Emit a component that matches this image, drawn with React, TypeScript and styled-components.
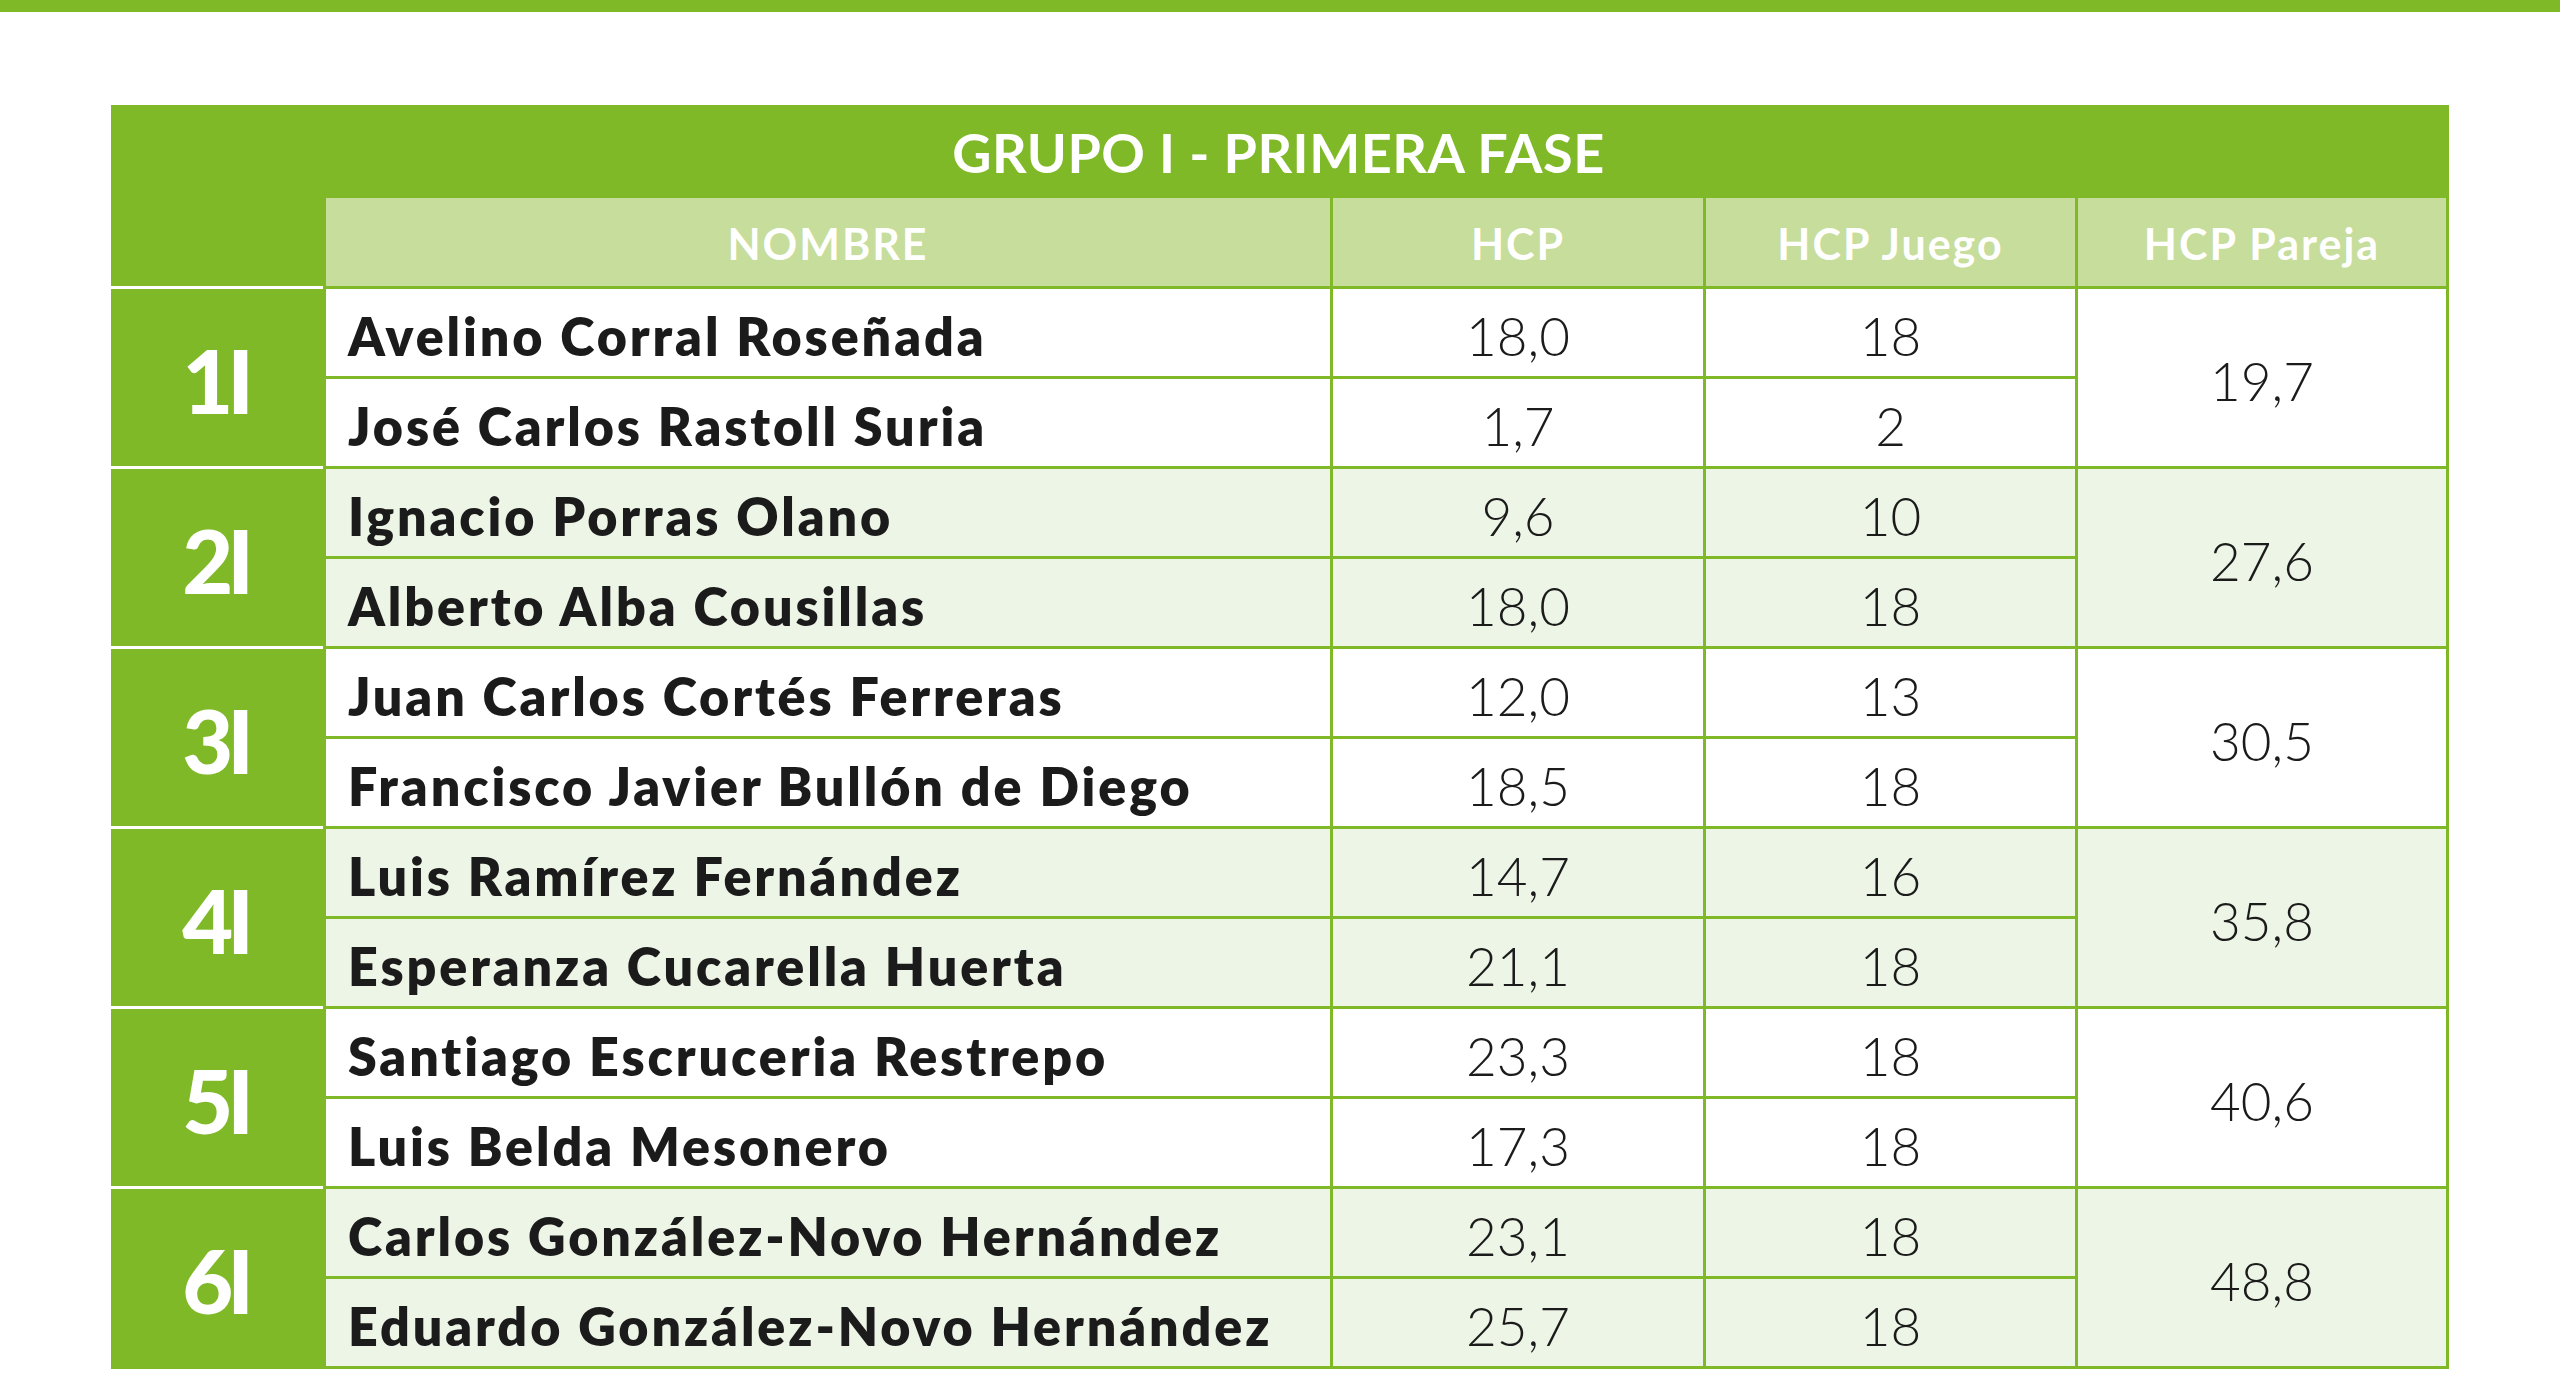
import { Fragment } from 'react'
import styled, { createGlobalStyle } from 'styled-components'

const colors = {
  green: '#7fb927',
  header: '#c6dd9c',
  tint: '#edf5e6',
  white: '#ffffff',
  text: '#1b1b1b',
}

type Player = { name: string; hcp: string; juego: string }
type Pair = { label: string; pareja: string; players: [Player, Player] }

const pairs: Pair[] = [
  {
    label: '1I',
    pareja: '19,7',
    players: [
      { name: 'Avelino Corral Roseñada', hcp: '18,0', juego: '18' },
      { name: 'José Carlos Rastoll Suria', hcp: '1,7', juego: '2' },
    ],
  },
  {
    label: '2I',
    pareja: '27,6',
    players: [
      { name: 'Ignacio Porras Olano', hcp: '9,6', juego: '10' },
      { name: 'Alberto Alba Cousillas', hcp: '18,0', juego: '18' },
    ],
  },
  {
    label: '3I',
    pareja: '30,5',
    players: [
      { name: 'Juan Carlos Cortés Ferreras', hcp: '12,0', juego: '13' },
      { name: 'Francisco Javier Bullón de Diego', hcp: '18,5', juego: '18' },
    ],
  },
  {
    label: '4I',
    pareja: '35,8',
    players: [
      { name: 'Luis Ramírez Fernández', hcp: '14,7', juego: '16' },
      { name: 'Esperanza Cucarella Huerta', hcp: '21,1', juego: '18' },
    ],
  },
  {
    label: '5I',
    pareja: '40,6',
    players: [
      { name: 'Santiago Escruceria Restrepo', hcp: '23,3', juego: '18' },
      { name: 'Luis Belda Mesonero', hcp: '17,3', juego: '18' },
    ],
  },
  {
    label: '6I',
    pareja: '48,8',
    players: [
      { name: 'Carlos González-Novo Hernández', hcp: '23,1', juego: '18' },
      { name: 'Eduardo González-Novo Hernández', hcp: '25,7', juego: '18' },
    ],
  },
]

export default function App() {
  return (
    <>
      <GlobalStyle />
      <TopBar />
      <Page>
        <Table>
          <Title>GRUPO I - PRIMERA FASE</Title>
          <Corner />
          <HeadCell>NOMBRE</HeadCell>
          <HeadCell>HCP</HeadCell>
          <HeadCell>HCP Juego</HeadCell>
          <HeadCell>HCP Pareja</HeadCell>

          {pairs.map((pair, index) => {
            const tinted = index % 2 === 1
            return (
              <Fragment key={pair.label}>
                <PairLabel>{pair.label}</PairLabel>
                {pair.players.map((player, i) => (
                  <Fragment key={player.name}>
                    <NameCell $tinted={tinted}>{player.name}</NameCell>
                    <NumberCell $tinted={tinted}>{player.hcp}</NumberCell>
                    <NumberCell $tinted={tinted}>{player.juego}</NumberCell>
                    {i === 0 && <PairCell $tinted={tinted}>{pair.pareja}</PairCell>}
                  </Fragment>
                ))}
              </Fragment>
            )
          })}
        </Table>
      </Page>
    </>
  )
}

const GlobalStyle = createGlobalStyle`
  html, body {
    margin: 0;
    padding: 0;
    background: ${colors.white};
  }
  body {
    font-family: Lato, 'Noto Sans', sans-serif;
    color: ${colors.text};
  }
  * {
    box-sizing: border-box;
  }
`

const TopBar = styled.div`
  height: 12px;
  background: ${colors.green};
`

const Page = styled.main`
  padding-top: 93px;
`

const Table = styled.section`
  width: 2338px;
  margin: 0 auto;
  display: grid;
  grid-template-columns: 212px 1007px 373px 372px 371px;
  grid-template-rows: 93px 88px repeat(12, 90px);
  border-right: 3px solid ${colors.green};
  border-bottom: 3px solid ${colors.green};
`

const Title = styled.h1`
  grid-column: 1 / -1;
  margin: 0;
  background: ${colors.green};
  color: ${colors.white};
  font-family: Lato, sans-serif;
  font-weight: 700;
  font-size: 54px;
  letter-spacing: 0.5px;
  display: flex;
  align-items: center;
  justify-content: center;
  padding-top: 2px;
`

const Corner = styled.div`
  background: ${colors.green};
`

const HeadCell = styled.div`
  background: ${colors.header};
  border-left: 3px solid ${colors.green};
  color: ${colors.white};
  font-family: Lato, sans-serif;
  font-weight: 700;
  font-size: 43px;
  letter-spacing: 2px;
  display: flex;
  align-items: center;
  justify-content: center;
  padding-top: 2px;
`

const PairLabel = styled.div`
  grid-row: span 2;
  background: ${colors.green};
  border-top: 3px solid ${colors.white};
  color: ${colors.white};
  font-family: Lato, sans-serif;
  font-weight: 900;
  font-size: 88px;
  letter-spacing: -6px;
  display: flex;
  align-items: center;
  justify-content: center;
  padding-top: 4px;
  padding-right: 4px;
`

const BodyCell = styled.div<{ $tinted: boolean }>`
  background: ${({ $tinted }) => ($tinted ? colors.tint : colors.white)};
  border-top: 3px solid ${colors.green};
  border-left: 3px solid ${colors.green};
  display: flex;
  align-items: center;
  padding-top: 6px;
`

const NameCell = styled(BodyCell)`
  padding-left: 22px;
  font-family: Lato, sans-serif;
  font-weight: 800;
  font-size: 52px;
  letter-spacing: 2.9px;
`

const NumberCell = styled(BodyCell)`
  justify-content: center;
  font-family: Lato, sans-serif;
  font-weight: 300;
  font-size: 53px;
`

const PairCell = styled(NumberCell)`
  grid-row: span 2;
  grid-column: 5;
`
